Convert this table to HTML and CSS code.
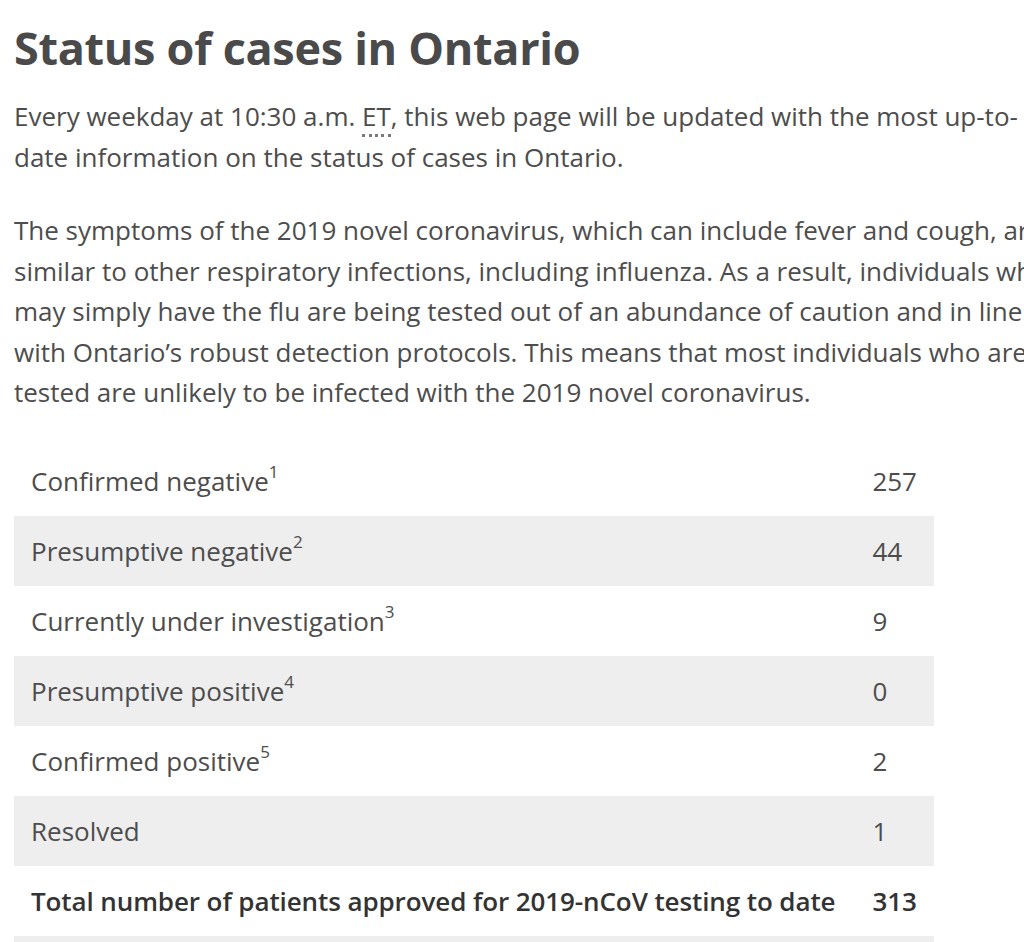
FILE: index.html
```html
<!DOCTYPE html>
<html lang="en">
<head>
<meta charset="utf-8">
<title>Status of cases in Ontario</title>
<link rel="stylesheet" href="styles.css">
</head>
<body>
<main class="content">
  <h1 class="title">Status of cases in Ontario</h1>
  <p class="para">Every weekday at 10:30 a.m. <abbr title="Eastern Time" class="abbr">ET</abbr>, this web page will be updated with the most up-to-date information on the status of cases in Ontario.</p>
  <p class="para">The symptoms of the 2019 novel coronavirus, which can include fever and cough, are similar to other respiratory infections, including influenza. As a result, individuals who may simply have the flu are being tested out of an abundance of caution and in line with Ontario’s robust detection protocols. This means that most individuals who are tested are unlikely to be infected with the 2019 novel coronavirus.</p>
  <table class="cases">
    <tbody>
      <tr><td class="label">Confirmed negative<sup class="note">1</sup></td><td class="value">257</td></tr>
      <tr class="alt"><td class="label">Presumptive negative<sup class="note">2</sup></td><td class="value">44</td></tr>
      <tr><td class="label">Currently under investigation<sup class="note">3</sup></td><td class="value">9</td></tr>
      <tr class="alt"><td class="label">Presumptive positive<sup class="note">4</sup></td><td class="value">0</td></tr>
      <tr><td class="label">Confirmed positive<sup class="note">5</sup></td><td class="value">2</td></tr>
      <tr class="alt"><td class="label">Resolved</td><td class="value">1</td></tr>
      <tr class="total"><td class="label">Total number of patients approved for 2019-nCoV testing to date</td><td class="value">313</td></tr>
      <tr class="alt"><td class="label">&nbsp;</td><td class="value">&nbsp;</td></tr>
    </tbody>
  </table>
</main>
</body>
</html>
```

FILE: styles.css
```css
html, body {
  margin: 0;
  padding: 0;
  overflow: hidden;
  background: #ffffff;
}

body {
  font-family: "Open Sans", "Liberation Sans", sans-serif;
  color: #4d4d4d;
}

.content {
  width: 1044px;
  padding: 16px 0 0 14px;
}

.title {
  margin: 0 0 16px 0;
  font-family: "Open Sans", sans-serif;
  font-weight: 700;
  font-size: 45px;
  line-height: 64px;
  color: #4a4a4a;
  letter-spacing: -0.3px;
}

.para {
  margin: 0 0 33px 0;
  font-size: 26px;
  line-height: 40.5px;
}

.abbr {
  text-decoration: none;
  border-bottom: 3px dotted #7a7a7a;
}

.cases {
  width: 920px;
  border-collapse: collapse;
  margin-top: 10px;
  font-size: 26px;
}

.cases td {
  height: 70px;
  padding: 0 17px;
  vertical-align: middle;
  box-sizing: border-box;
}

.cases .value {
  width: 78px;
}

.cases .alt td {
  background: #eeeeee;
}

.cases .total td {
  font-weight: 600;
  color: #333333;
}

.cases .total .label {
  white-space: nowrap;
  letter-spacing: -0.1px;
}

.note {
  font-size: 17px;
  line-height: 0;
  position: relative;
  top: -3px;
}
```
